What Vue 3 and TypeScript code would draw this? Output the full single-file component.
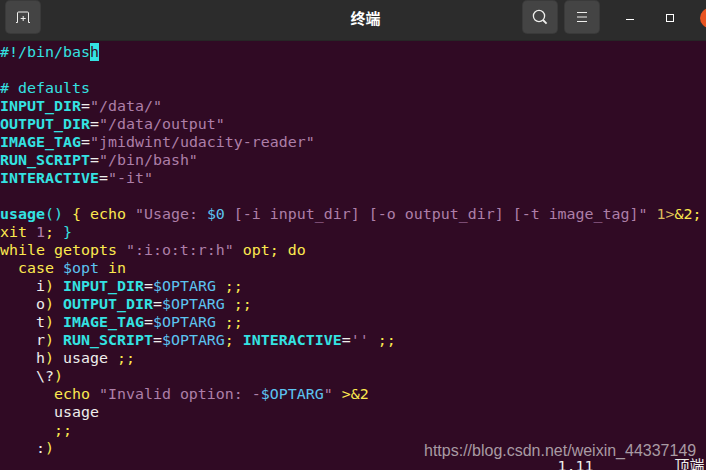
<script setup lang="ts">
type Tok = [string, string]
const opt = (k: string, name: string): Tok[] => [
  ['    ' + k, 'w'], [')', 'y'], [' ', 'w'], [name, 'b'], ['=', 'w'], ['$OPTARG', 'v'], [' ;;', 'y']
]
const assign = (name: string, val: string): Tok[] => [[name, 'b'], ['=', 'w'], [val, 's']]
const lines: Tok[][] = [
  [['#!/bin/bas', 'c'], ['h', 'cur']],
  [],
  [['# defaults', 'c']],
  assign('INPUT_DIR', '"/data/"'),
  assign('OUTPUT_DIR', '"/data/output"'),
  assign('IMAGE_TAG', '"jmidwint/udacity-reader"'),
  assign('RUN_SCRIPT', '"/bin/bash"'),
  assign('INTERACTIVE', '"-it"'),
  [],
  [['usage', 'b'], ['()', 'c'], [' { echo ', 'y'], ['"Usage: ', 's'], ['$0', 'v'], [' [-i input_dir] [-o output_dir] [-t image_tag]"', 's'], [' 1>', 't'], ['&2;', 'y']],
  [['xit ', 'y'], ['1', 's'], ['; ', 'y'], ['}', 'c']],
  [['while getopts ', 'y'], ['":i:o:t:r:h"', 's'], [' opt; do', 'y']],
  [['  case ', 'y'], ['$opt', 'v'], [' in', 'y']],
  opt('i', 'INPUT_DIR'),
  opt('o', 'OUTPUT_DIR'),
  opt('t', 'IMAGE_TAG'),
  [['    r', 'w'], [')', 'y'], [' ', 'w'], ['RUN_SCRIPT', 'b'], ['=', 'w'], ['$OPTARG', 'v'], ['; ', 'y'], ['INTERACTIVE', 'b'], ['=', 'w'], ["''", 's'], [' ;;', 'y']],
  [['    h', 'w'], [')', 'y'], [' usage', 'w'], [' ;;', 'y']],
  [['    \\?', 'w'], [')', 'y']],
  [['      echo ', 'y'], ['"Invalid option: -', 's'], ['$OPTARG', 'v'], ['"', 's'], [' >&2', 'y']],
  [['      usage', 'w']],
  [['      ;;', 'y']],
  [['    :', 'w'], [')', 'y']],
  [[' '.repeat(62) + '1,11' + ' '.repeat(9), 'w'], ['顶端', 'w']]
]
</script>

<template>
  <div class="window">
    <header class="titlebar">
      <button class="hbtn newtab" aria-label="新标签页">
        <svg width="16" height="14" viewBox="0 0 16 14" fill="none" stroke="#eeeeec" stroke-width="1">
          <path d="M1 12.5h1.5V3a1 1 0 0 1 1-1h9a1 1 0 0 1 1 1v9.5H15" />
          <path d="M8.2 6v5M5.7 8.5h5" />
        </svg>
      </button>
      <div class="title">终端</div>
      <button class="hbtn" aria-label="搜索">
        <svg width="16" height="16" viewBox="0 0 16 16" fill="none" stroke="#eeeeec" stroke-width="1.3">
          <circle cx="7" cy="7" r="5.6" />
          <path d="M11 11l3.6 3.6" stroke-width="1.8" />
        </svg>
      </button>
      <button class="hbtn" aria-label="菜单">
        <svg width="12" height="10" viewBox="0 0 12 10" stroke="#eeeeec" stroke-width="1">
          <path d="M1 .5h10M1 5h10M1 9.5h10" />
        </svg>
      </button>
      <div class="winctl">
        <span class="min"></span>
        <span class="max"></span>
        <span class="close"></span>
      </div>
    </header>
    <pre class="term"><div v-for="(line, i) in lines" :key="i" class="line"><span v-for="(t, j) in line" :key="j" :class="t[1]">{{ t[0] }}</span></div></pre>
    <div class="mark">https://blog.csdn.net/weixin_44337149</div>
  </div>
</template>

<style scoped>
.window {
  position: relative;
  width: 706px;
  height: 470px;
  overflow: hidden;
  background: #300a24;
}
.titlebar {
  display: flex;
  align-items: flex-start;
  height: 41px;
  box-sizing: border-box;
  padding: 1px 0 0 6px;
  background: #2c2c2c;
  border-bottom: 1px solid #262626;
}
.hbtn {
  display: flex;
  flex: none;
  align-items: center;
  justify-content: center;
  width: 34px;
  height: 32px;
  padding: 0;
  border: 0;
  border-radius: 4px;
  background: #444444;
  box-shadow: 0 0 0 1px #3a3a3a;
}
.hbtn + .hbtn {
  margin-left: 8px;
}
.title {
  flex: 1;
  padding: 7px 0 0 168px;
  text-align: center;
  color: #ffffff;
  font: 700 15px/20px "Noto Sans CJK SC", sans-serif;
}
.winctl {
  display: flex;
  flex: none;
  align-items: flex-start;
  width: 107px;
  height: 32px;
}
.winctl span {
  flex: none;
  box-sizing: border-box;
}
.min {
  width: 8px;
  height: 1px;
  margin: 18px 0 0 27px;
  background: #ffffff;
}
.max {
  width: 8px;
  height: 8px;
  margin: 13px 0 0 32px;
  border: 1px solid #ffffff;
}
.close {
  width: 20px;
  height: 20px;
  margin: 7px 0 0 26px;
  border-radius: 50%;
  background: #e95420;
}
.term {
  margin: 0;
  padding-top: 2px;
  font: 14.95px/18px "DejaVu Sans Mono", "Noto Sans CJK SC", monospace;
  color: #eeeeec;
}
.line {
  height: 18px;
  white-space: pre;
}
.c { color: #34e2e2; }
.b { color: #34e2e2; font-weight: 700; }
.s { color: #ad7fa8; }
.y { color: #fce94f; }
.t { color: #d9b85c; }
.w { color: #eeeeec; }
.v { color: #5cc3f0; }
.cur { background: #34e2e2; color: #300a24; }
.mark {
  position: absolute;
  left: 424px;
  top: 441px;
  color: #a89aa3;
  font: 16px/20px "Liberation Sans", sans-serif;
  white-space: nowrap;
}
</style>
